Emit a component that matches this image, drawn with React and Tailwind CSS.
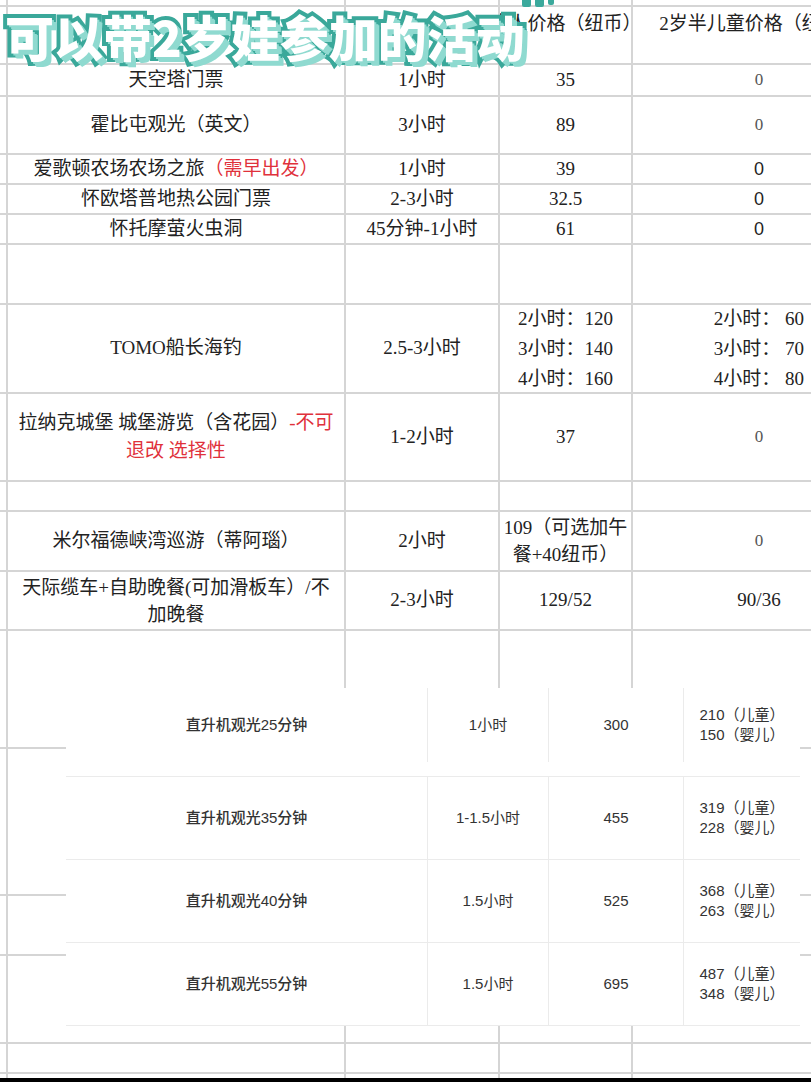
import React from 'react'

const RED = 'text-[#e0313b]'

const rows = [
  { h: 'h-[5px]' },
  { h: 'h-[56px]', header: true },
  { h: 'h-[30px]', name: '天空塔门票', time: '1小时', price: '35', kid: '0', zero: 'serif' },
  { h: 'h-[56px]', name: '霍比屯观光（英文）', time: '3小时', price: '89', kid: '0', zero: 'serif' },
  {
    h: 'h-[28px]',
    name: (
      <>
        爱歌顿农场农场之旅<span className={RED}>（需早出发）</span>
      </>
    ),
    time: '1小时',
    price: '39',
    kid: '0',
    zero: 'sans',
  },
  { h: 'h-[28px]', name: '怀欧塔普地热公园门票', time: '2-3小时', price: '32.5', kid: '0', zero: 'sans' },
  { h: 'h-[28px]', name: '怀托摩萤火虫洞', time: '45分钟-1小时', price: '61', kid: '0', zero: 'sans' },
  { h: 'h-[58px]' },
  {
    h: 'h-[87px]',
    name: 'TOMO船长海钓',
    time: '2.5-3小时',
    price: (
      <div className="leading-[30px]">
        <div>2小时：120</div>
        <div>3小时：140</div>
        <div>4小时：160</div>
      </div>
    ),
    kid: (
      <div className="leading-[30px]">
        <div>2小时：&nbsp;60</div>
        <div>3小时：&nbsp;70</div>
        <div>4小时：&nbsp;80</div>
      </div>
    ),
  },
  {
    h: 'h-[86px]',
    name: (
      <div className="leading-[28px]">
        拉纳克城堡 城堡游览（含花园）<span className={RED}>-不可</span>
        <br />
        <span className={RED}>退改 选择性</span>
      </div>
    ),
    time: '1-2小时',
    price: '37',
    kid: '0',
    zero: 'serif',
  },
  { h: 'h-[28px]' },
  {
    h: 'h-[58px]',
    name: '米尔福德峡湾巡游（蒂阿瑙）',
    time: '2小时',
    price: (
      <div className="leading-[27px]">
        109（可选加午
        <br />
        餐+40纽币）
      </div>
    ),
    kid: '0',
    zero: 'serif',
  },
  {
    h: 'h-[57px]',
    name: (
      <div className="leading-[27px]">
        天际缆车+自助晚餐(可加滑板车）/不
        <br />
        加晚餐
      </div>
    ),
    time: '2-3小时',
    price: '129/52',
    kid: '90/36',
  },
  { h: 'h-[116px]' },
  { h: 'h-[145px]' },
  { h: 'h-[58px]' },
  { h: 'h-[86px]' },
  { h: 'h-[28px]' },
  { h: 'h-[40px]' },
]

const heli = [
  { h: 'h-[89px] pb-[14px]', name: '直升机观光25分钟', time: '1小时', price: '300', kid: ['210（儿童）', '150（婴儿）'] },
  { h: 'h-[83px]', name: '直升机观光35分钟', time: '1-1.5小时', price: '455', kid: ['319（儿童）', '228（婴儿）'] },
  { h: 'h-[83px]', name: '直升机观光40分钟', time: '1.5小时', price: '525', kid: ['368（儿童）', '263（婴儿）'] },
  { h: 'h-[83px]', name: '直升机观光55分钟', time: '1.5小时', price: '695', kid: ['487（儿童）', '348（婴儿）'] },
]

function Cell({ children, className = '' }) {
  return (
    <div className={`bg-white flex items-center justify-center text-center overflow-hidden ${className}`}>
      {children}
    </div>
  )
}

function Zero({ kind, children }) {
  if (kind === 'sans') {
    return <span className="font-['Liberation_Sans',sans-serif] text-[18px] text-[#1f1f1f]">{children}</span>
  }
  if (kind === 'serif') {
    return <span className="text-[17px] text-[#555]">{children}</span>
  }
  return children
}

export default function App() {
  return (
    <div className="relative w-[811px] h-[1082px] overflow-hidden bg-white flex flex-col">
      {/* 表格 */}
      <div className="flex-1 overflow-hidden">
        <div className="w-[885px] flex flex-col gap-y-[2px] bg-[#d5d5d5] font-['Liberation_Serif','Noto_Sans_CJK_SC',serif] text-[19px] text-[#222]">
          {rows.map((r, i) => (
            <div key={i} className={`grid grid-cols-[6px_336px_152px_131px_252px] gap-x-[2px] ${r.h}`}>
              <Cell />
              {r.header ? (
                <>
                  <Cell />
                  <Cell />
                  <Cell className="items-start pt-[3px] whitespace-nowrap">
                    <span className="shrink-0">成人价格（纽币）</span>
                  </Cell>
                  <Cell className="items-start pt-[3px] whitespace-nowrap">
                    <span className="shrink-0">2岁半儿童价格（纽币）</span>
                  </Cell>
                </>
              ) : (
                <>
                  <Cell className="px-[4px]">{r.name}</Cell>
                  <Cell>{r.time}</Cell>
                  <Cell>{r.price}</Cell>
                  <Cell>
                    <Zero kind={r.zero}>{r.kid}</Zero>
                  </Cell>
                </>
              )}
            </div>
          ))}
        </div>
      </div>
      <div className="h-[4px] bg-black shrink-0" />

      {/* 直升机表（贴图） */}
      <div className="absolute left-[66px] top-[688px] w-[734px] bg-white font-['Liberation_Sans','Noto_Sans_CJK_SC',sans-serif] text-[15px] text-[#333]">
        {heli.map((r, i) => (
          <div
            key={i}
            className={`grid grid-cols-[361px_121px_135px_117px] border-b border-[#ebebeb] ${r.h}`}
          >
            <div className="flex items-center justify-center font-medium">{r.name}</div>
            <div className="flex items-center justify-center border-l border-[#ebebeb]">{r.time}</div>
            <div className="flex items-center justify-center border-l border-[#ebebeb]">{r.price}</div>
            <div className="flex flex-col items-center justify-center border-l border-[#ebebeb] leading-[20px]">
              <div>{r.kid[0]}</div>
              <div>{r.kid[1]}</div>
            </div>
          </div>
        ))}
      </div>

      {/* 标题贴字 */}
      <div className="absolute left-[522px] top-0 flex gap-[4px]">
        <div className="w-[9px] h-[7px] bg-[#3ba99c] rounded-b-[2px]" />
        <div className="w-[9px] h-[7px] bg-[#3ba99c] rounded-b-[2px]" />
        <div className="w-[6px] h-[5px] bg-[#3ba99c] rounded-b-[2px]" />
      </div>
      <div className="absolute left-[5px] top-[11px] whitespace-nowrap font-['Noto_Sans_CJK_SC',sans-serif] font-black text-[49px] leading-none tracking-[0px] text-white [-webkit-text-stroke:8px_#3aa89a] [paint-order:stroke_fill] [text-shadow:2px_2px_0_#8fdad0,4px_4px_0_#8fdad0,5px_5px_0_#8fdad0]">
        可以带2岁娃参加的活动
      </div>
    </div>
  )
}
